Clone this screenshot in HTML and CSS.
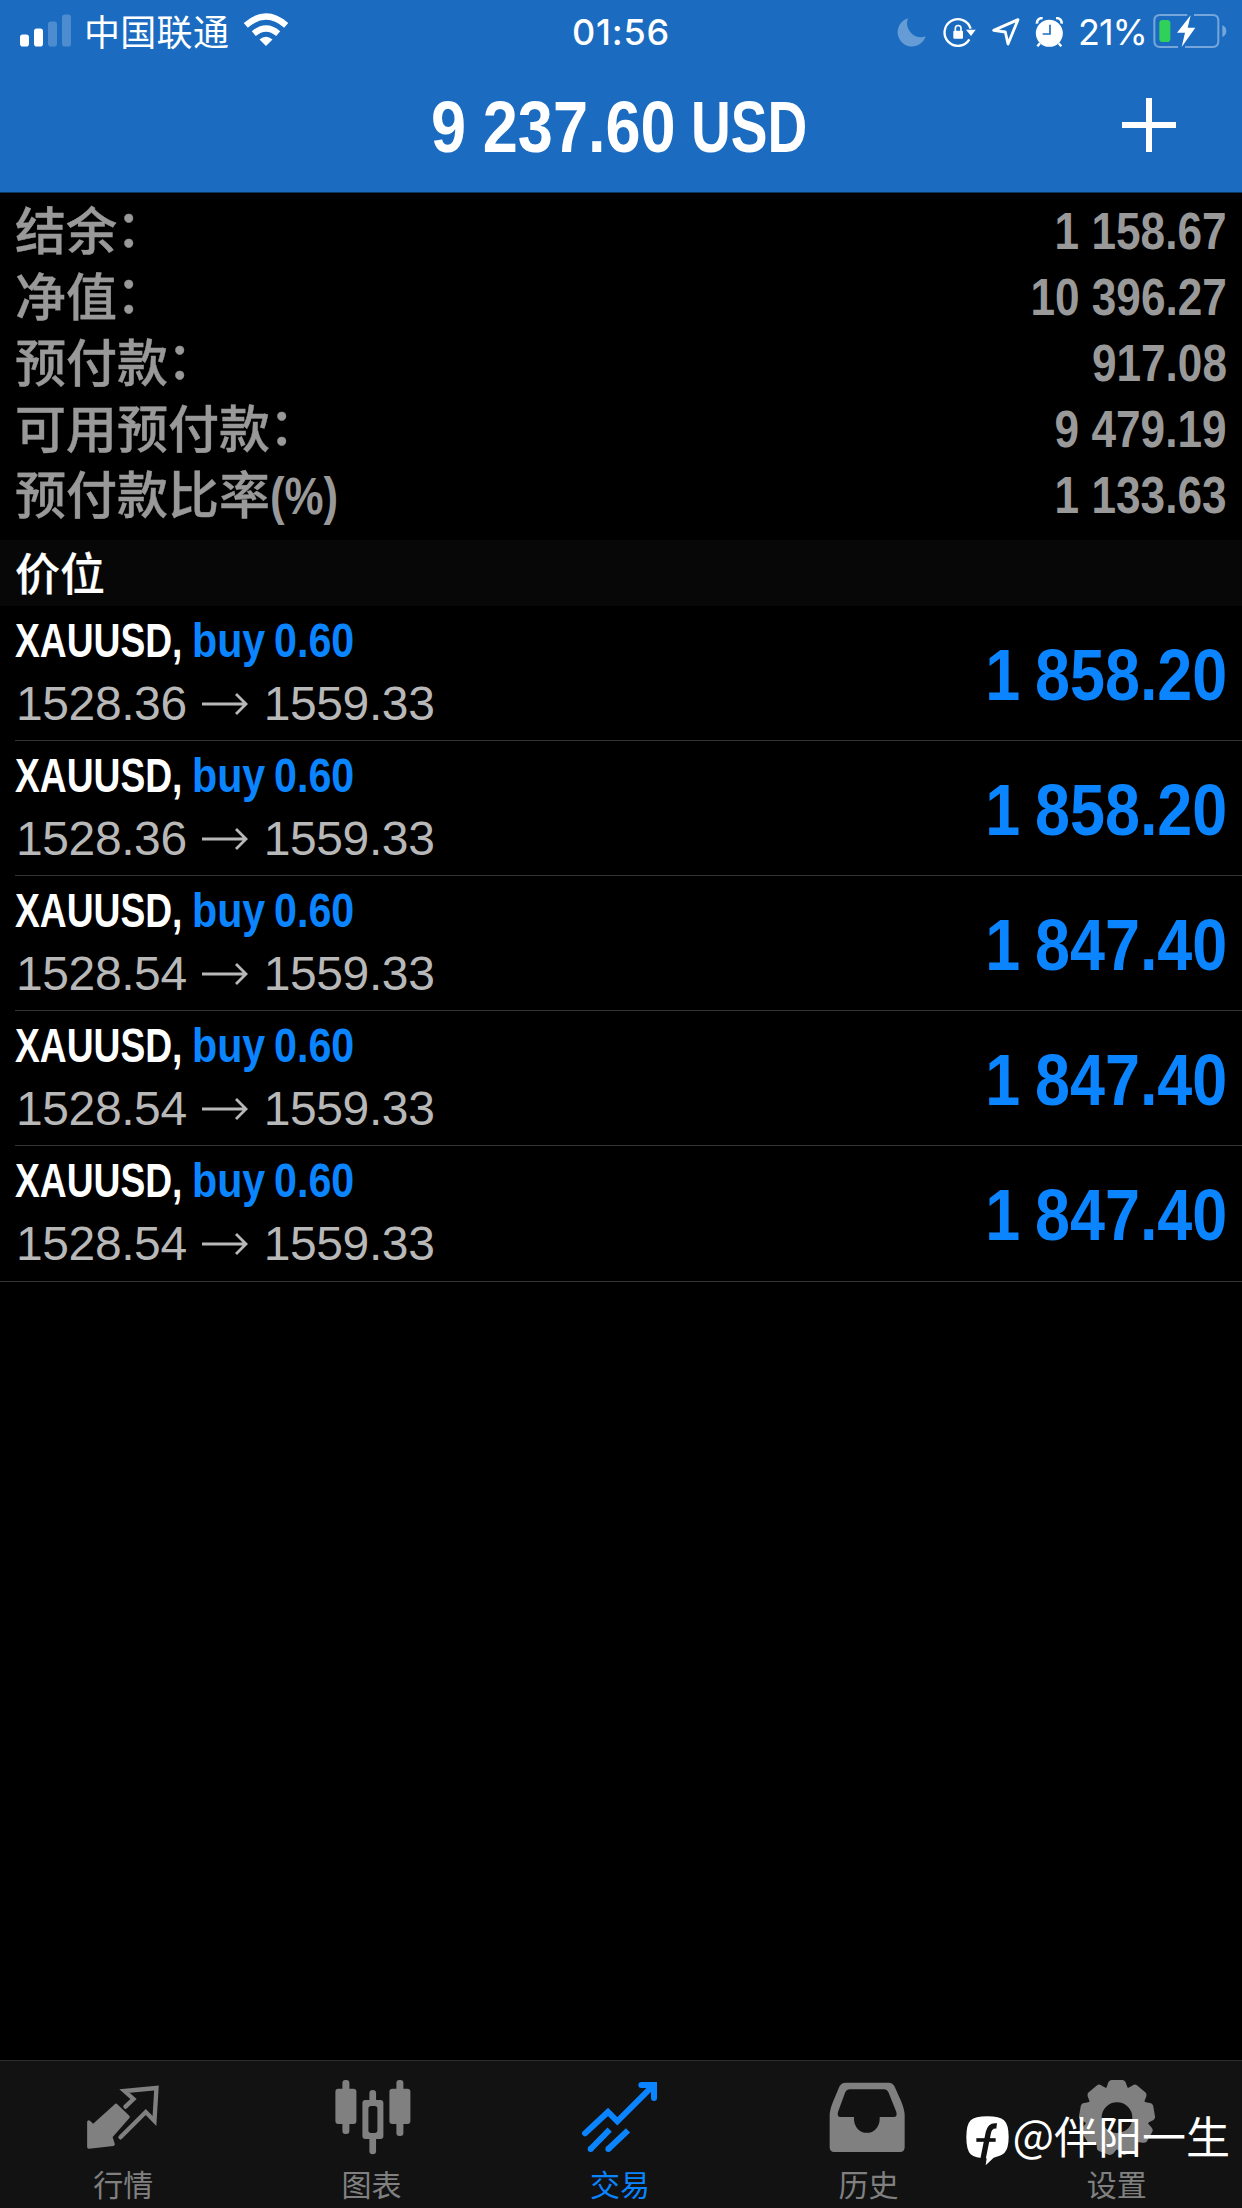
FILE: index.html
```html
<!DOCTYPE html>
<html lang="zh-CN">
<head>
<meta charset="utf-8">
<title>交易</title>
<link rel="stylesheet" href="styles.css">
</head>
<body>
<div class="screen">
  <header class="header">
    <div class="status">
      <div class="status-left">
        <svg class="signal" width="52" height="33" viewBox="0 0 52 33" fill="#fff">
          <rect x="0" y="20.500" width="9" height="12" rx="2.800"/>
          <rect x="14" y="14.500" width="9" height="18" rx="2.800"/>
          <rect x="28" y="7.500" width="9" height="25" rx="2.800" opacity=".22"/>
          <rect x="42" y="0.500" width="9" height="32" rx="2.800" opacity=".22"/>
        </svg>
        <span class="carrier">中国联通</span>
        <svg class="wifi" width="46" height="34" viewBox="0 0 46 34">
          <path d="M23 33 L16.500 26.400 Q23 21 29.500 26.400 Z" fill="#fff"/>
          <path d="M10.800 20.600 Q23 10.400 35.200 20.600" fill="none" stroke="#fff" stroke-width="6.200"/>
          <path d="M2.800 12.400 Q23 -5.400 43.200 12.400" fill="none" stroke="#fff" stroke-width="6.200"/>
        </svg>
      </div>
      <div class="clock">01:56</div>
      <div class="status-right">
        <svg class="moon" width="29" height="29" viewBox="113 50 87 87"><path d="M146 51 A43 43 0 1 0 199 105 A42 42 0 0 1 146 51Z" fill="#fff" opacity=".33"/></svg>
        <svg class="rotation" width="33" height="30" viewBox="250 49 99 90">
          <path d="M329 116 A40 40 0 1 1 333 84" fill="none" stroke="#fff" stroke-width="7"/>
          <path d="M319 87H348L334 106Z" fill="#fff"/>
          <rect x="281" y="90" width="29" height="24" rx="3" fill="#fff"/>
          <path d="M287 92V83a8.500 8.500 0 0 1 17 0V92" fill="none" stroke="#fff" stroke-width="5"/>
        </svg>
        <svg class="location" width="28" height="28" viewBox="397 50 84 84"><path d="M402 87 L475 55 L445 128 L437 92 Z" fill="none" stroke="#fff" stroke-width="8.500" stroke-linejoin="round"/></svg>
        <svg class="alarm" width="29" height="30" viewBox="525 46 87 90">
          <circle cx="568" cy="95" r="40.500" fill="#fff"/>
          <path d="M531 66 Q530 50 548 49 M605 66 Q606 50 588 49" stroke="#fff" stroke-width="8" fill="none"/>
          <path d="M540 125l-8 9M596 125l8 9" stroke="#fff" stroke-width="7"/>
          <path d="M570 69V97H548" fill="none" stroke="#1b6cc0" stroke-width="5"/>
        </svg>
        <span class="percent">21%</span>
        <svg class="battery" width="74" height="36" viewBox="878 36 222 108">
          <path d="M981 42H899Q882 42 882 59V121Q882 138 899 138H953M1001 42H1057Q1074 42 1074 59V121Q1074 138 1057 138H974" fill="none" stroke="#fff" stroke-width="6" opacity=".4"/>
          <path d="M1086 73Q1098 78 1098 90T1086 108Z" fill="#fff" opacity=".4"/>
          <rect x="897" y="57" width="33" height="66" rx="10" fill="#30d158"/>
          <path d="M991 43L950 95H974L964 138L1005 80H982Z" fill="#fff"/>
        </svg>
      </div>
    </div>
    <div class="nav">
      <h1 class="total"><span class="total-amount">9 237.60</span><span class="total-currency">USD</span></h1>
      <svg class="add" width="54" height="54" viewBox="0 0 54 54"><path d="M27 0V54M0 27H54" stroke="#fff" stroke-width="6"/></svg>
    </div>
  </header>

  <section class="summary">
    <div class="summary-row"><span>结余<i class="colon">：</i></span><b>1 158.67</b></div>
    <div class="summary-row"><span>净值<i class="colon">：</i></span><b>10 396.27</b></div>
    <div class="summary-row"><span>预付款<i class="colon">：</i></span><b>917.08</b></div>
    <div class="summary-row"><span>可用预付款<i class="colon">：</i></span><b>9 479.19</b></div>
    <div class="summary-row"><span>预付款比率<i class="pct">(%)</i></span><b>1 133.63</b></div>
  </section>

  <h2 class="section-title">价位</h2>

  <ul class="positions">
    <li class="position">
      <div class="deal"><b class="symbol">XAUUSD,</b><b class="side">buy 0.60</b></div>
      <div class="prices">1528.36<svg class="arrow" width="46" height="22" viewBox="0 0 46 22"><path d="M0 11H44M34 1L44 11L34 21"/></svg>1559.33</div>
      <b class="profit">1 858.20</b>
    </li>
    <li class="position">
      <div class="deal"><b class="symbol">XAUUSD,</b><b class="side">buy 0.60</b></div>
      <div class="prices">1528.36<svg class="arrow" width="46" height="22" viewBox="0 0 46 22"><path d="M0 11H44M34 1L44 11L34 21"/></svg>1559.33</div>
      <b class="profit">1 858.20</b>
    </li>
    <li class="position">
      <div class="deal"><b class="symbol">XAUUSD,</b><b class="side">buy 0.60</b></div>
      <div class="prices">1528.54<svg class="arrow" width="46" height="22" viewBox="0 0 46 22"><path d="M0 11H44M34 1L44 11L34 21"/></svg>1559.33</div>
      <b class="profit">1 847.40</b>
    </li>
    <li class="position">
      <div class="deal"><b class="symbol">XAUUSD,</b><b class="side">buy 0.60</b></div>
      <div class="prices">1528.54<svg class="arrow" width="46" height="22" viewBox="0 0 46 22"><path d="M0 11H44M34 1L44 11L34 21"/></svg>1559.33</div>
      <b class="profit">1 847.40</b>
    </li>
    <li class="position">
      <div class="deal"><b class="symbol">XAUUSD,</b><b class="side">buy 0.60</b></div>
      <div class="prices">1528.54<svg class="arrow" width="46" height="22" viewBox="0 0 46 22"><path d="M0 11H44M34 1L44 11L34 21"/></svg>1559.33</div>
      <b class="profit">1 847.40</b>
    </li>
  </ul>

  <nav class="tabs">
    <div class="tab">
      <svg class="tab-icon" viewBox="132.600 78 240 240">
        <path d="M229 166L265 201L213 260L220 283L147 291V216L160 228Z" fill="currentColor" stroke="currentColor" stroke-width="10" stroke-linejoin="round"/>
        <path d="M257 170L281 147L254 123L350 114L344 213L318 186L242 262" fill="none" stroke="currentColor" stroke-width="13" stroke-linejoin="miter" stroke-linecap="round"/>
      </svg>
      <span>行情</span>
    </div>
    <div class="tab">
      <svg class="tab-icon" viewBox="877.800 78 240 240" fill="currentColor">
        <rect x="885" y="116" width="63" height="106" rx="9"/><rect x="906" y="90" width="21" height="162" rx="9"/>
        <rect x="1047" y="116" width="63" height="106" rx="9"/><rect x="1068" y="90" width="21" height="168" rx="9"/>
        <path fill-rule="evenodd" d="M987 150V130q0-10 10-10t10 10V150H1020q9 0 9 9V258q0 9-9 9H1007V303q0 10-10 10t-10-10V267H975q-9 0-9-9V159q0-9 9-9ZM992 168q-8 0-8 8V241q0 8 8 8H1003q8 0 8-8V176q0-8-8-8Z"/>
      </svg>
      <span>图表</span>
    </div>
    <div class="tab active">
      <svg class="tab-icon" viewBox="123 78 240 240" fill="none" stroke="currentColor" stroke-width="18">
        <path d="M135 250L204 186L232 214L340 106" stroke-linecap="round"/>
        <path d="M304 105H342V144" stroke-linecap="round"/>
        <path d="M209 239L152 297M264 241L205 297"/>
        <path d="M152 297h.1M205 297h.1" stroke-linecap="round"/>
      </svg>
      <span>交易</span>
    </div>
    <div class="tab">
      <svg class="tab-icon" viewBox="868 78 240 240">
        <path fill="currentColor" fill-rule="evenodd" d="M918 98H1047Q1058 98 1064 108L1085 155Q1095 180 1095 196V292Q1095 306 1081 306H884Q870 306 870 292V196Q870 180 880 155L900 108Q906 98 918 98ZM929 118Q921 118 917 126L895 186Q891 201 903 201H943V208A38 40 0 0 0 1020 208V201H1062Q1074 201 1070 186L1046 126Q1042 118 1034 118Z"/>
      </svg>
      <span>历史</span>
    </div>
    <div class="tab">
      <svg class="tab-icon" viewBox="-117 -125 240 240">
        <defs><path id="tooth" d="M-38 -84Q-32 -86 -28 -100Q-25 -112 -17 -113H17Q25 -112 28 -100Q32 -86 38 -84L22 -55H-22Z"/></defs>
        <g fill="currentColor">
          <circle r="68" fill="none" stroke="currentColor" stroke-width="44"/>
          <use href="#tooth"/><use href="#tooth" transform="rotate(40)"/><use href="#tooth" transform="rotate(80)"/>
          <use href="#tooth" transform="rotate(120)"/><use href="#tooth" transform="rotate(160)"/><use href="#tooth" transform="rotate(200)"/>
          <use href="#tooth" transform="rotate(240)"/><use href="#tooth" transform="rotate(280)"/><use href="#tooth" transform="rotate(320)"/>
        </g>
      </svg>
      <span>设置</span>
    </div>
  </nav>

  <div class="watermark">
    <svg width="44" height="50" viewBox="77 204 132 150">
      <path d="M141 205Q178 205 191 217Q205 230 205 267Q205 302 192 315Q184 323 160 329L136 352L139 331Q104 331 91 319Q78 306 78 268Q78 230 91 217Q104 205 141 205Z" fill="#fff"/>
      <path d="M108 276H166" fill="none" stroke="#121212" stroke-width="11"/>
      <path d="M169 234Q149 231 144 254L128 333" fill="none" stroke="#121212" stroke-width="16"/>
    </svg>
    <span><i class="at">@</i>伴阳一生</span>
  </div>
</div>
</body>
</html>
```
FILE: styles.css
```css
* { box-sizing: border-box; }
body {
  margin: 0;
  background: #000;
  color: #fff;
  font-family: "Liberation Sans", "Noto Sans CJK SC", sans-serif;
}
svg { display: block; flex: none; }
h1, h2, ul { margin: 0; padding: 0; list-style: none; }

.screen {
  position: relative;
  display: flex;
  flex-direction: column;
  width: 1242px;
  height: 2208px;
  overflow: hidden;
}

/* header */
.header {
  height: 193px;
  background: #1b6cc0;
  border-bottom: 1px solid #10365f;
}
.status {
  display: grid;
  grid-template-columns: 1fr auto 1fr;
  align-items: center;
  height: 60px;
}
.status-left, .status-right { display: flex; align-items: center; }
.status-left { padding-left: 20px; }
.signal { margin-top: -1px; }
.carrier {
  margin: -3px 0 0 12px;
  font: 36px/60px "Noto Sans CJK SC", sans-serif;
  letter-spacing: .3px;
}
.wifi { margin-left: 14px; margin-top: -2px; }
.clock {
  font: 500 36px/60px Inter, sans-serif;
  letter-spacing: .8px;
  padding-top: 2px;
}
.status-right { justify-content: flex-end; padding-right: 15px; }
.moon, .rotation, .location, .alarm { margin-top: 2px; }
.rotation { margin-left: 17px; }
.location { margin-left: 16px; }
.alarm { margin-left: 15px; }
.percent {
  width: 75px;
  margin-left: 14px;
  font: 36px/60px Inter, sans-serif;
  letter-spacing: -1px;
  padding-top: 2px;
}
.nav {
  display: grid;
  grid-template-columns: 1fr 120px;
  align-items: center;
  height: 132px;
}
.total {
  display: grid;
  grid-template-columns: 260px 120px;
  padding: 3px 0 0 431px;
  font-size: 72px;
  line-height: 129px;
  white-space: nowrap;
}
.total span { transform-origin: left; }
.total-amount { transform: scaleX(.876); word-spacing: -1px; }
.total-currency { transform: scaleX(.765); }
.add { margin-top: -2px; }

/* account summary */
.summary { height: 347px; padding: 6px 15px 0; color: #999; }
.summary-row {
  display: flex;
  justify-content: space-between;
  height: 66px;
  font-size: 51px;
  line-height: 66px;
  white-space: nowrap;
}
.summary-row span {
  font: 500 51px/59px "Noto Sans CJK SC", sans-serif;
  -webkit-text-stroke: .4px;
}
.summary-row b {
  transform: scaleX(.866);
  transform-origin: right;
}
.summary-row i { font-style: normal; }
.colon { display: inline-block; transform: translate(-1px, -3px); }
.pct {
  display: inline-block;
  font: bold 51px/59px "Liberation Sans", sans-serif;
  -webkit-text-stroke: 0;
  transform: scaleX(.86);
  transform-origin: left;
}

.section-title {
  height: 66px;
  padding-left: 15px;
  background: #070707;
  font: 500 45px/63px "Noto Sans CJK SC", sans-serif;
  -webkit-text-stroke: .2px;
}

/* open positions */
.position {
  display: grid;
  grid-template-columns: 1fr 300px;
  grid-template-rows: 63px 63px;
  height: 135px;
  margin-left: 15px;
  padding: 3px 15px 0 0;
  border-bottom: 1px solid #333;
  font-size: 48px;
  line-height: 63px;
  white-space: nowrap;
}
.position:last-child { height: 136px; margin-left: 0; padding-left: 15px; }
.deal { display: grid; grid-template-columns: 177px 200px; }
.symbol { transform: scaleX(.775); transform-origin: left; }
.side {
  color: #0a84ff;
  word-spacing: -3px;
  transform: scaleX(.858);
  transform-origin: left;
}
.prices {
  grid-row: 2;
  display: flex;
  align-items: center;
  padding-left: 1px;
  color: #b8b8b8;
  letter-spacing: -.4px;
}
.arrow {
  margin: 0 16px 0 15px;
  fill: none;
  stroke: currentColor;
  stroke-width: 2.800;
}
.profit {
  grid-column: 2;
  grid-row: 1 / 3;
  align-self: center;
  justify-self: end;
  padding-top: 6px;
  color: #0a84ff;
  font-size: 72px;
  line-height: 80px;
  word-spacing: -3px;
  transform: scaleX(.873);
  transform-origin: right;
}

/* bottom tabs */
.tabs {
  display: grid;
  grid-template-columns: repeat(5, 1fr);
  height: 148px;
  margin-top: auto;
  background: #121212;
  border-top: 1px solid #2b2b2b;
}
.tab {
  display: flex;
  flex-direction: column;
  align-items: center;
  padding-top: 15px;
  color: #808080;
  font: 30px/44px "Noto Sans CJK SC", sans-serif;
}
.tab.active { color: #0a84ff; }
.tab span { margin-right: 2px; }
.tab-icon { width: 80px; height: 80px; margin-bottom: 5px; }

/* author stamp floating over the tab bar */
.watermark {
  position: absolute;
  right: 12px;
  bottom: 46px;
  display: flex;
  align-items: flex-end;
  gap: 2px;
  font: 44px/54px "Noto Sans CJK SC", sans-serif;
  white-space: nowrap;
}
.watermark svg { margin-bottom: -4px; }
.at { display: inline-block; font-style: normal; transform: translateY(-2px); }
```
